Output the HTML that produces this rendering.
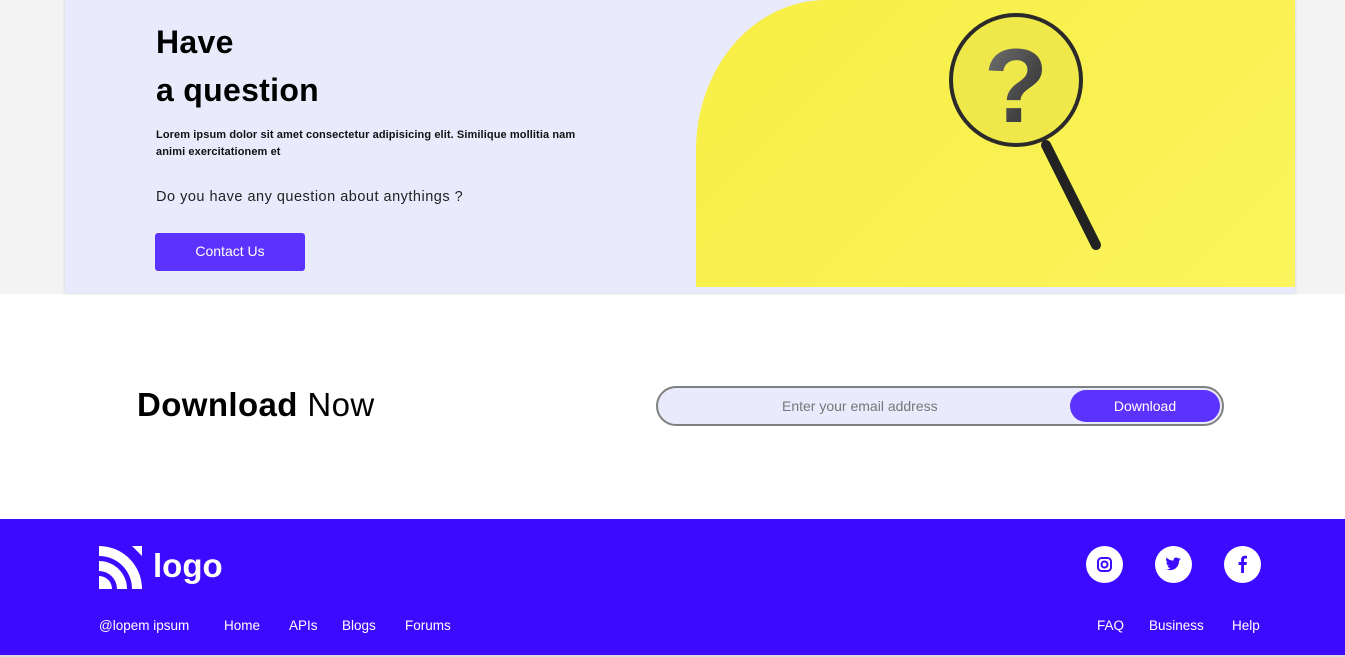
<!DOCTYPE html>
<html><head><meta charset="utf-8"><style>
*{margin:0;padding:0;box-sizing:border-box}
body{width:1345px;height:657px;overflow:hidden;background:#fff;font-family:"Liberation Sans",sans-serif;position:relative}
.top{position:absolute;left:0;top:0;width:1345px;height:294px;background:#f3f3f3}
.card{position:absolute;left:65px;top:0;width:1230px;height:293px;background:#e9ebfd;box-shadow:0 0 3px rgba(0,0,0,.15)}
.yel{position:absolute;left:696px;top:0;width:599px;height:287px;border-top-left-radius:130px 150px;overflow:hidden;background:linear-gradient(135deg,#f7ee45,#fbf45c)}
h1{position:absolute;left:156px;top:18px;font-size:32px;line-height:48px;font-weight:bold;color:#000;letter-spacing:.3px}
.lorem{position:absolute;left:156px;top:127px;font-size:11px;line-height:17px;font-weight:bold;width:430px;color:#111;letter-spacing:.1px}
.q{position:absolute;left:156px;top:189px;font-size:14.5px;color:#222;letter-spacing:.5px}
.btn{position:absolute;left:155px;top:233px;width:150px;height:38px;background:#5c33fe;border-radius:3px;color:#fff;font-size:14px;text-align:center;line-height:37px}
.dl{position:absolute;left:137px;top:386px;font-size:33px;color:#000;letter-spacing:.4px}
.pill{position:absolute;left:656px;top:386px;width:568px;height:40px;border:2px solid #808080;border-radius:20px;background:#e9ebfd}
.pill span{position:absolute;left:124px;top:10px;font-size:14px;color:#777}
.pill b{position:absolute;right:2px;top:2px;width:150px;height:32px;border-radius:16px;background:#5c33fe;color:#fff;font-weight:normal;font-size:14px;text-align:center;line-height:32px}
.foot{position:absolute;left:0;top:519px;width:1345px;height:136px;background:#3c0bff;color:#fff}
.bot{position:absolute;left:0;top:655px;width:1345px;height:2px;background:#ddd}
.logo{position:absolute;left:153px;top:28px;font-size:33px;font-weight:bold}
.links a{position:absolute;top:99px;font-size:13.5px;color:#fff;text-decoration:none}
.soc{position:absolute;top:27px;width:37px;height:37px;border-radius:50%;background:#fff}
</style></head><body>
<div class="top"></div>
<div class="card"></div>
<div class="yel">
<svg width="599" height="287" style="position:absolute;left:0;top:0">
<defs><linearGradient id="g" x1="0" y1="0" x2="1" y2="1"><stop offset="0" stop-color="#777"/><stop offset="1" stop-color="#222"/></linearGradient></defs>
<line x1="350" y1="145" x2="400" y2="245" stroke="#222" stroke-width="10" stroke-linecap="round"/>
<circle cx="320" cy="80" r="65" fill="#eee84a" stroke="#2a2a2a" stroke-width="4"/>
<text x="320" y="122" text-anchor="middle" font-size="105" font-weight="bold" fill="url(#g)" font-family="Liberation Sans">?</text>
</svg>
</div>
<h1>Have<br>a question</h1>
<div class="lorem">Lorem ipsum dolor sit amet consectetur adipisicing elit. Similique mollitia nam animi exercitationem et</div>
<div class="q">Do you have any question about anythings ?</div>
<div class="btn">Contact Us</div>
<div class="dl"><b>Download</b> Now</div>
<div class="pill"><span>Enter your email address</span><b>Download</b></div>
<div class="foot">
<svg style="position:absolute;left:99px;top:27px" width="43" height="43" viewBox="0 0 43 43">
<path d="M0 0 A43 43 0 0 1 43 43 L33 43 A33 33 0 0 0 0 10Z M0 15 A28 28 0 0 1 28 43 L18 43 A18 18 0 0 0 0 25Z M0 30 A13 13 0 0 1 13 43 L0 43Z" fill="#fff"/>
<path d="M33 0 L43 0 L43 10Z" fill="#fff"/></svg>
<div class="logo">logo</div>
<div class="links"><a style="left:99px">@lopem ipsum</a><a style="left:224px">Home</a><a style="left:289px">APIs</a><a style="left:342px">Blogs</a><a style="left:405px">Forums</a>
<a style="left:1097px">FAQ</a><a style="left:1149px">Business</a><a style="left:1232px">Help</a></div>
<div class="soc" style="left:1086px"><svg width="37" height="37"><rect x="12" y="12" width="13" height="13" rx="3.5" fill="none" stroke="#3c0bff" stroke-width="2"/><circle cx="18.5" cy="18.5" r="3" fill="none" stroke="#3c0bff" stroke-width="2"/></svg></div>
<div class="soc" style="left:1155px"><svg width="37" height="37"><path d="M11 23c5 3 13 0 13-8l2-2-2 .5 1.5-2-2 1c-2-2-5-1-5 2-3 0-5-1-7-3-1 2 0 4 1 5h-1c0 2 1 3 3 3.5h-2c.5 1.5 2 2 3 2-2 1.5-3 1.5-5.5 1z" fill="#3c0bff"/></svg></div>
<div class="soc" style="left:1224px"><svg width="37" height="37"><path d="M20 27v-8h2.5l.4-3H20v-2c0-1 .3-1.5 1.5-1.5H23v-2.6c-.3 0-1.2-.1-2.2-.1-2.2 0-3.700 1.3-3.7 3.8V16h-2.5v3h2.5v8z" fill="#3c0bff"/></svg></div>
</div>
<div class="bot"></div>
</body></html>
